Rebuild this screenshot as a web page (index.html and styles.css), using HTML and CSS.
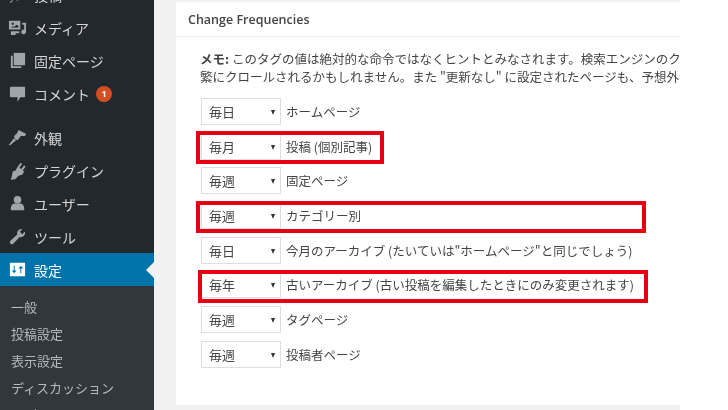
FILE: index.html
```html
<!DOCTYPE html>
<html lang="ja">

<head>
    <meta charset="UTF-8">
    <meta name="viewport" content="width=device-width, initial-scale=1.0">
    <title>Change Frequencies</title>
    <link rel="stylesheet" href="styles.css">
</head>

<body>
    <div class="page">
        <div class="sidebar">
            <ul class="menu">
                <li class="menu_item">
                    <svg class="menu_icon" viewBox="0 0 20 20"><path d="M13 2l5 5-3 1-4 5-1 4-3-3-4 5-1-1 5-4-3-3 4-1 4-5z"/></svg>
                    <span>投稿</span>
                </li>
                <li class="menu_item">
                    <svg class="menu_icon" viewBox="0 0 20 20"><path fill-rule="evenodd" d="M1 3h12v9H1zM4 5v2h2V5zM3 10h8V8.500L9 7 7 9H5z"/><path d="M15 5h4v9.500a2.500 2.500 0 1 1-2-2.400V7h-2zM3 14h9v2H8v2H3z"/></svg>
                    <span>メディア</span>
                </li>
                <li class="menu_item">
                    <svg class="menu_icon" viewBox="0 0 20 20"><path d="M6 2h12v13H6z"/><path d="M3 5h2v11h9v2H3z"/></svg>
                    <span>固定ページ</span>
                </li>
                <li class="menu_item">
                    <svg class="menu_icon" viewBox="0 0 20 20"><path d="M3 3h14a1 1 0 0 1 1 1v9a1 1 0 0 1-1 1h-4l-3 5v-5H3a1 1 0 0 1-1-1V4a1 1 0 0 1 1-1z"/></svg>
                    <span>コメント</span>
                    <span class="menu_badge">1</span>
                </li>
                <li class="menu_item menu_item_first">
                    <svg class="menu_icon" viewBox="0 0 20 20"><path d="M11 2l8 4-1 2.500-4.500 0L10 13l-3-1.500-.5-3 3-3zM6 11l2.500 2L2 18.500 1 17.500z"/></svg>
                    <span>外観</span>
                </li>
                <li class="menu_item">
                    <svg class="menu_icon" viewBox="0 0 20 20"><path d="M13 2l2 1-3 4 2 1.500 3-4 1.500 1.500-3 4 1.500 1-2 3.500-4 1-3 3.500-5 1 1-4 1-5 3-1 1.500-3z"/></svg>
                    <span>プラグイン</span>
                </li>
                <li class="menu_item">
                    <svg class="menu_icon" viewBox="0 0 20 20"><circle cx="10" cy="6" r="4"/><path d="M3 17v-2c0-3 2-5 4-5h6c2 0 4 2 4 5v2z"/></svg>
                    <span>ユーザー</span>
                </li>
                <li class="menu_item">
                    <svg class="menu_icon" viewBox="0 0 20 20"><path d="M14 2a4.500 4.500 0 0 0-4.300 5.800L2.500 14.500a2 2 0 0 0 3 3l6.800-7a4.500 4.500 0 0 0 5.500-5.700L15 7.500l-2.500-2.500 2.700-2.800A5 5 0 0 0 14 2z"/></svg>
                    <span>ツール</span>
                </li>
                <li class="menu_item menu_item_active">
                    <svg class="menu_icon" viewBox="0 0 20 20"><path fill-rule="evenodd" d="M2 3h16v14H2zM6 6v5H4l2.500 3L9 11H7V6zM13.500 6L11 9h2v5h1V9h2z"/></svg>
                    <span>設定</span>
                </li>
            </ul>
            <ul class="submenu">
                <li>一般</li>
                <li>投稿設定</li>
                <li>表示設定</li>
                <li>ディスカッション</li>
                <li>メディア</li>
            </ul>
        </div>

        <div class="content">
            <div class="card">
                <h2 class="card_title">Change Frequencies</h2>
                <div class="card_body">
                    <p class="note"><strong>メモ:</strong> このタグの値は絶対的な命令ではなくヒントとみなされます。検索エンジンのクローラーは<br>繁にクロールされるかもしれません。また "更新なし" に設定されたページも、予想外の変更を</p>
                    <ul class="freq_list">
                        <li class="freq_row"><span class="freq_select">毎日</span><span>ホームページ</span></li>
                        <li class="freq_row"><span class="freq_select">毎月</span><span>投稿 (個別記事)</span></li>
                        <li class="freq_row"><span class="freq_select">毎週</span><span>固定ページ</span></li>
                        <li class="freq_row"><span class="freq_select">毎週</span><span>カテゴリー別</span></li>
                        <li class="freq_row"><span class="freq_select">毎日</span><span>今月のアーカイブ (たいていは"ホームページ"と同じでしょう)</span></li>
                        <li class="freq_row"><span class="freq_select">毎年</span><span>古いアーカイブ (古い投稿を編集したときにのみ変更されます)</span></li>
                        <li class="freq_row"><span class="freq_select">毎週</span><span>タグページ</span></li>
                        <li class="freq_row"><span class="freq_select">毎週</span><span>投稿者ページ</span></li>
                    </ul>
                </div>
            </div>
        </div>

        <div class="mark mark_post"></div>
        <div class="mark mark_category"></div>
        <div class="mark mark_archive"></div>
    </div>
</body>

</html>
```

FILE: styles.css
```css
html,
body {
    margin: 0;
    height: 100%;
    background-color: white;
    font-family: "Noto Sans CJK JP", "Open Sans", sans-serif;
    overflow: hidden;
}

ul {
    list-style: none;
    margin: 0;
    padding: 0;
}

.page {
    position: relative;
    display: flex;
    width: 728px;
    height: 410px;
    overflow: hidden;
    filter: blur(0.4px);
}

.sidebar {
    flex: 0 0 154px;
    background: #23282d;
    color: #d3d5d7;
}

.menu {
    margin-top: -22px;
}

.menu_item {
    display: flex;
    align-items: center;
    height: 33px;
    padding-left: 8px;
    font-size: 14px;
}

.menu_item_first {
    margin-top: 11px;
}

.menu_item_active {
    position: relative;
    background: #0073aa;
    color: white;
}

.menu_item_active::after {
    content: "";
    position: absolute;
    right: 0;
    top: 9px;
    border-top: 8px solid transparent;
    border-bottom: 8px solid transparent;
    border-right: 8px solid #f1f1f1;
}

.menu_icon {
    width: 19px;
    height: 19px;
    margin-right: 7px;
    fill: #a0a5aa;
}

.menu_item_active .menu_icon {
    fill: white;
}

.menu_badge {
    width: 16px;
    height: 16px;
    margin-left: 6px;
    border-radius: 50%;
    background: #d54e21;
    color: white;
    font-family: "Open Sans", sans-serif;
    font-size: 9px;
    font-weight: 700;
    line-height: 16px;
    text-align: center;
}

.submenu {
    height: 130px;
    padding-top: 7px;
    background: #32373c;
    color: #b4b9be;
    font-size: 13px;
}

.submenu li {
    height: 27px;
    padding-left: 11px;
    line-height: 27px;
}

.content {
    flex: 0 0 504px;
    min-width: 0;
    padding: 2px 0 5px 22px;
    background: #f1f1f1;
}

.card {
    height: 100%;
    background: white;
    color: #444;
    overflow: hidden;
}

.card_title {
    margin: 0;
    height: 34px;
    padding-left: 12px;
    border-bottom: 1px solid #eee;
    font-family: "Open Sans", sans-serif;
    font-size: 12.500px;
    font-weight: 600;
    line-height: 35px;
}

.card_body {
    padding: 13px 0 0 24px;
}

.note {
    margin: 0 0 12px;
    font-size: 12.500px;
    line-height: 18px;
    white-space: nowrap;
}

.freq_row {
    display: flex;
    align-items: center;
    gap: 5px;
    height: 27px;
    margin-bottom: 7.700px;
    padding-left: 1px;
    font-size: 12.500px;
    white-space: nowrap;
}

.freq_select {
    position: relative;
    box-sizing: border-box;
    width: 80px;
    height: 27px;
    padding-left: 7px;
    border: 1px solid #ddd;
    font-size: 13px;
    line-height: 25px;
}

.freq_select::after {
    content: "";
    position: absolute;
    right: 5px;
    top: 11px;
    border-top: 5px solid #333;
    border-left: 2.500px solid transparent;
    border-right: 2.500px solid transparent;
}

/* red boxes drawn over the screenshot */
.mark {
    position: absolute;
    box-sizing: border-box;
    border: 4px solid #e60012;
}

.mark_post {
    left: 196px;
    top: 131px;
    width: 188px;
    height: 33px;
}

.mark_category {
    left: 196px;
    top: 201px;
    width: 450px;
    height: 32px;
}

.mark_archive {
    left: 198px;
    top: 270px;
    width: 450px;
    height: 33px;
}
```
